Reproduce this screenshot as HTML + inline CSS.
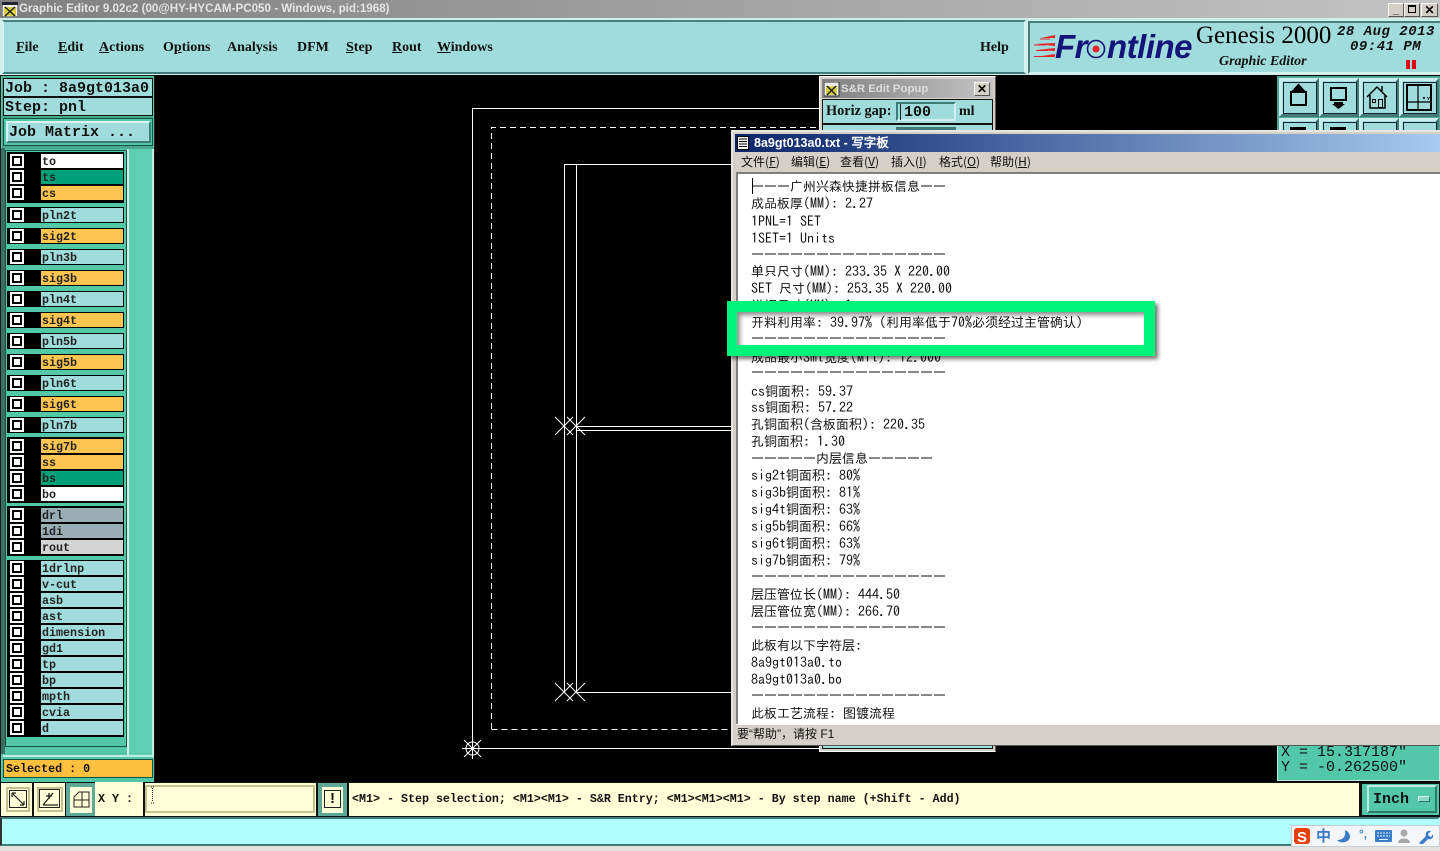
<!DOCTYPE html>
<html><head><meta charset="utf-8"><style>
html,body{margin:0;padding:0;width:1440px;height:851px;overflow:hidden;background:#d4d0c8}
div,span.a,svg.a{position:absolute;box-sizing:border-box}
.menu{font:bold 14px/16px "Liberation Serif",serif;top:40px;color:#111;white-space:nowrap}
.mono{font-family:"Liberation Mono",monospace;font-weight:bold;color:#111;white-space:pre}
.ck{left:10px;width:14px;height:14px;border:2px solid #fff;background:#000}
.ck:after{content:"";position:absolute;left:2px;top:2px;width:6px;height:6px;background:#fff}
.lb{left:41px;width:82px;height:14px;font:bold 11.7px/16px "Liberation Mono",monospace;color:#222;padding-left:1px;white-space:pre;background:#a0dcdc;overflow:hidden}
.grp{left:7px;width:117px;background:#000}
.wl{left:751px;font:14px/17px "IPAGothic","WenQuanYi Zen Hei","Noto Sans CJK SC",sans-serif;color:#111;white-space:pre;width:600px;height:17px}
.wl em{font-style:normal;font-size:13px}
.tool{width:40px;height:39px;top:78px;background:#a0dcdc;border:3px solid;border-color:#c9eeee #3f7c78 #3f7c78 #c9eeee}
.tool b{position:absolute;left:1px;top:1px;width:32px;height:30px;border:1px solid #123;display:block}
.wm{top:155px;font:12px/14px "WenQuanYi Zen Hei","Noto Sans CJK SC",sans-serif;color:#111;white-space:nowrap}
.by{background:#ffffd8}
</style></head><body>

<!-- title bar -->
<div style="left:0;top:0;width:1440px;height:18px;background:linear-gradient(90deg,#808080,#c4c4c4)"></div>
<svg class="a" style="left:2px;top:2px" width="16" height="15"><rect width="16" height="15" fill="#eee" stroke="#333"/><rect y="0" width="16" height="3" fill="#223"/><rect x="2" y="5" width="12" height="9" fill="#d8d040"/><path d="M3 5l10 9M13 5L3 14" stroke="#222" stroke-width="1.5"/></svg>
<div style="left:19px;top:1px;font:bold 11.620px/16px 'Liberation Sans',sans-serif;color:#e4e4e4;white-space:nowrap">Graphic Editor 9.02c2 (00@HY-HYCAM-PC050 - Windows, pid:1968)</div>
<div style="left:1388px;top:3px;width:16px;height:14px;background:#d4d0c8;border:1px solid;border-color:#fff #555 #555 #fff;font:bold 11px/12px 'Liberation Sans';text-align:center">_</div>
<div style="left:1404px;top:3px;width:16px;height:14px;background:#d4d0c8;border:1px solid;border-color:#fff #555 #555 #fff"></div>
<div style="left:1408px;top:5px;width:8px;height:8px;border:1px solid #000;border-top-width:2px"></div>
<div style="left:1421px;top:3px;width:17px;height:14px;background:#d4d0c8;border:1px solid;border-color:#fff #555 #555 #fff;font:bold 12px/12px 'Liberation Sans';text-align:center">✕</div>

<!-- menu bar -->
<div style="left:0;top:18px;width:1440px;height:57px;background:#cfeeee"></div>
<div style="left:2px;top:20px;width:1024px;height:54px;background:#a0dcdc;border:2px solid;border-color:#4c7f7c #d8f2f2 #3f7c78 #d8f2f2"></div>
<div class="menu" style="left:16px"><u>F</u>ile</div>
<div class="menu" style="left:58px"><u>E</u>dit</div>
<div class="menu" style="left:99px"><u>A</u>ctions</div>
<div class="menu" style="left:163px">O<u>p</u>tions</div>
<div class="menu" style="left:227px">Analysis</div>
<div class="menu" style="left:297px">DFM</div>
<div class="menu" style="left:346px"><u>S</u>tep</div>
<div class="menu" style="left:392px"><u>R</u>out</div>
<div class="menu" style="left:437px"><u>W</u>indows</div>
<div class="menu" style="left:980px">Help</div>

<div style="left:1028px;top:21px;width:412px;height:53px;background:#a0dcdc;border-top:2px solid #4c7f7c;border-left:2px solid #4c7f7c;border-bottom:2px solid #d8f2f2"></div>
<svg class="a" style="left:1033px;top:33px" width="24" height="26"><path d="M2 24l20-3v3zM4 17l18-2v3zM2 11l20-1v3zM8 5l14-3v3z" fill="#e8222a"/><path d="M1 23.500h12M3 17.500h12M1 12h12M7 6h10" stroke="#e8222a"/></svg>
<div style="left:1055px;top:28px;font:italic bold 33px/38px 'Liberation Sans',sans-serif;color:#14147a;white-space:nowrap;letter-spacing:-.5px">Fr<span style="display:inline-block;width:20px"></span>ntline</div>
<svg class="a" style="left:1086px;top:39px" width="20" height="20"><circle cx="10" cy="10" r="8.500" fill="none" stroke="#14147a" stroke-width="1.600"/><circle cx="10" cy="10" r="3.500" fill="#e8222a"/></svg>
<div style="left:1196px;top:21px;font:25px/30px 'Liberation Serif',serif;color:#000;white-space:nowrap">Genesis 2000</div>
<div style="left:1219px;top:54px;font:italic bold 14px/16px 'Liberation Serif',serif;color:#111;white-space:nowrap">Graphic Editor</div>
<div style="left:1337px;top:24px;font:italic bold 14px/16px 'Liberation Mono',monospace;color:#111;white-space:pre;letter-spacing:.5px">28 Aug 2013</div>
<div style="left:1350px;top:39px;font:italic bold 14px/16px 'Liberation Mono',monospace;color:#111;white-space:pre;letter-spacing:.5px">09:41 PM</div>
<div style="left:1406px;top:60px;width:4px;height:9px;background:#e00010"></div>
<div style="left:1412px;top:60px;width:4px;height:9px;background:#e00010"></div>

<!-- canvas -->
<div style="left:155px;top:75px;width:1285px;height:708px;background:#000"></div>
<svg class="a" style="left:155px;top:75px" width="700" height="708" fill="none" stroke="#fff" stroke-width="1" shape-rendering="crispEdges">
<path d="M317.500 673V33.500H680M317.500 673.500H700"/>
<path d="M336.500 654V52.500H680M336.500 654.500H700" stroke-dasharray="6 4"/>
<path d="M409.500 89V618M421.500 89V618M409.500 89.500H700M421.500 351.500H700M421.500 355.500H700M421.500 617.500H700"/>
<path d="M400 342l18 18M418 342l-18 18M412 342l18 18M430 342l-18 18M400 608l18 18M418 608l-18 18M412 608l18 18M430 608l-18 18" shape-rendering="auto"/>
<g shape-rendering="auto"><circle cx="317.500" cy="673.500" r="6.500"/><path d="M309 665l17 17M326 665l-17 17M317.500 663v21M307 673.500h21"/></g>
</svg>

<!-- left panel -->
<div style="left:0;top:75px;width:155px;height:708px;background:#52c8a8;border:1px solid #1a1a1a"></div>
<div style="left:2px;top:77px;width:151px;height:72px;background:#4aa88f"></div>
<div style="left:3px;top:78px;width:150px;height:19px;background:#a0dcdc;border:1px solid #111"></div>
<div class="mono" style="left:5px;top:80px;font-size:15px;line-height:17px">Job : 8a9gt013a0</div>
<div style="left:3px;top:97px;width:150px;height:19px;background:#a0dcdc;border:1px solid #111"></div>
<div class="mono" style="left:5px;top:99px;font-size:15px;line-height:17px">Step: pnl</div>
<div style="left:3px;top:118px;width:150px;height:28px;background:#52c8a8;border:1px solid #14513f"></div>
<div style="left:6px;top:121px;width:145px;height:22px;background:#a0dcdc;border:2px solid;border-color:#d8f2f2 #3f7c78 #3f7c78 #d8f2f2"></div>
<div class="mono" style="left:9px;top:124px;font-size:15px;line-height:17px">Job Matrix ...</div>
<div style="left:1px;top:148px;width:4px;height:606px;background:#3a6f62"></div>
<div style="left:127px;top:149px;width:27px;height:606px;background:#5ecfb0;border-left:2px solid #cfeee5;border-right:2px solid #c0ece0"></div>
<div style="left:5px;top:150px;width:122px;height:597px;background:#52c8a8;border:1px solid #14513f"></div>

<div class="grp" style="top:152px;height:51px"></div>
<div class="grp" style="top:207px;height:16px"></div><div class="grp" style="top:228px;height:16px"></div><div class="grp" style="top:249px;height:16px"></div><div class="grp" style="top:270px;height:16px"></div><div class="grp" style="top:291px;height:16px"></div><div class="grp" style="top:312px;height:16px"></div><div class="grp" style="top:333px;height:16px"></div><div class="grp" style="top:354px;height:16px"></div><div class="grp" style="top:375px;height:16px"></div><div class="grp" style="top:396px;height:16px"></div><div class="grp" style="top:417px;height:16px"></div>
<div class="grp" style="top:437px;height:66px"></div>
<div class="grp" style="top:506px;height:50px"></div>
<div class="grp" style="top:560px;height:177px"></div>

<div class="ck" style="top:154px"></div><div class="lb" style="top:154px;background:#fff">to</div>
<div class="ck" style="top:170px"></div><div class="lb" style="top:170px;background:#00a078">ts</div>
<div class="ck" style="top:186px"></div><div class="lb" style="top:186px;background:#ffc550">cs</div>
<div class="ck" style="top:208px"></div><div class="lb" style="top:208px">pln2t</div>
<div class="ck" style="top:229px"></div><div class="lb" style="top:229px;background:#ffc550">sig2t</div>
<div class="ck" style="top:250px"></div><div class="lb" style="top:250px">pln3b</div>
<div class="ck" style="top:271px"></div><div class="lb" style="top:271px;background:#ffc550">sig3b</div>
<div class="ck" style="top:292px"></div><div class="lb" style="top:292px">pln4t</div>
<div class="ck" style="top:313px"></div><div class="lb" style="top:313px;background:#ffc550">sig4t</div>
<div class="ck" style="top:334px"></div><div class="lb" style="top:334px">pln5b</div>
<div class="ck" style="top:355px"></div><div class="lb" style="top:355px;background:#ffc550">sig5b</div>
<div class="ck" style="top:376px"></div><div class="lb" style="top:376px">pln6t</div>
<div class="ck" style="top:397px"></div><div class="lb" style="top:397px;background:#ffc550">sig6t</div>
<div class="ck" style="top:418px"></div><div class="lb" style="top:418px">pln7b</div>
<div class="ck" style="top:439px"></div><div class="lb" style="top:439px;background:#ffc550">sig7b</div>
<div class="ck" style="top:455px"></div><div class="lb" style="top:455px;background:#ffc550">ss</div>
<div class="ck" style="top:471px"></div><div class="lb" style="top:471px;background:#00a078">bs</div>
<div class="ck" style="top:487px"></div><div class="lb" style="top:487px;background:#fff">bo</div>
<div class="ck" style="top:508px"></div><div class="lb" style="top:508px;background:#98aeb4">drl</div>
<div class="ck" style="top:524px"></div><div class="lb" style="top:524px;background:#98aeb4">1di</div>
<div class="ck" style="top:540px"></div><div class="lb" style="top:540px;background:#d4d4d4">rout</div>
<div class="ck" style="top:561px"></div><div class="lb" style="top:561px">1drlnp</div>
<div class="ck" style="top:577px"></div><div class="lb" style="top:577px">v-cut</div>
<div class="ck" style="top:593px"></div><div class="lb" style="top:593px">asb</div>
<div class="ck" style="top:609px"></div><div class="lb" style="top:609px">ast</div>
<div class="ck" style="top:625px"></div><div class="lb" style="top:625px">dimension</div>
<div class="ck" style="top:641px"></div><div class="lb" style="top:641px">gd1</div>
<div class="ck" style="top:657px"></div><div class="lb" style="top:657px">tp</div>
<div class="ck" style="top:673px"></div><div class="lb" style="top:673px">bp</div>
<div class="ck" style="top:689px"></div><div class="lb" style="top:689px">mpth</div>
<div class="ck" style="top:705px"></div><div class="lb" style="top:705px">cvia</div>
<div class="ck" style="top:721px"></div><div class="lb" style="top:721px">d</div>

<div style="left:3px;top:755px;width:151px;height:2px;background:#c0ece0"></div>
<div style="left:3px;top:759px;width:150px;height:19px;background:#ffc040;border:1px solid #14513f"></div>
<div class="mono" style="left:6px;top:761px;font-size:11.700px;line-height:16px">Selected : 0</div>

<!-- right toolbox -->
<div style="left:1277px;top:76px;width:163px;height:60px;background:#52a898"></div>
<div class="tool" style="left:1279px"><b></b><svg class="a" style="left:0;top:0" width="34" height="33" fill="none" stroke="#000" stroke-width="2"><path d="M9 11h15v13H9z"/><path d="M11 10l5.500-6 5.500 6z" fill="#000"/></svg></div>
<div class="tool" style="left:1319px"><b></b><svg class="a" style="left:0;top:0" width="34" height="33" fill="none" stroke="#000" stroke-width="2"><path d="M9 7h15v12H9z"/><path d="M12 21h9v2h2l-6.500 5-6.500-5h2z" fill="#000" stroke="none"/></svg></div>
<div class="tool" style="left:1359px"><b></b><svg class="a" style="left:0;top:0" width="34" height="33" fill="none" stroke="#000"><path d="M5 16L15 6l10 10M8 14v13h15V14M20 10V5" stroke-width="1.500"/><path d="M10.500 18.500h3v3h-3zM16.500 18.500h4v8h-4z"/></svg></div>
<div class="tool" style="left:1399px"><b></b><svg class="a" style="left:0;top:0" width="34" height="33" fill="none" stroke="#000"><path d="M5 4h24v25H5z" stroke-width="2"/><path d="M16 4v25M5 21h24" stroke-width="1.200"/><path d="M21 16l2 2m0-2l-2 2M25 16l1.500 1.500 1.500-1.500M26.500 17.500v1.500" stroke-width=".7"/></svg></div>
<div class="tool" style="left:1279px;top:118px"><b></b><span class="a" style="left:8px;top:6px;width:16px;height:4px;background:#000"></span></div>
<div class="tool" style="left:1319px;top:118px"><b></b><span class="a" style="left:8px;top:6px;width:16px;height:4px;background:#000"></span></div>
<div class="tool" style="left:1359px;top:118px"><b></b></div>
<div class="tool" style="left:1399px;top:118px"><b></b></div>

<!-- S&R popup -->
<div style="left:819px;top:76px;width:177px;height:676px;background:#d4d0c8;border:1px solid #fff;border-right-color:#555"></div>
<div style="left:822px;top:79px;width:171px;height:19px;background:linear-gradient(90deg,#808080,#c4c4c4)"></div>
<svg class="a" style="left:824px;top:82px" width="16" height="15"><rect width="15" height="14" fill="#eee" stroke="#333"/><rect x="2" y="4" width="11" height="9" fill="#d8d040"/><path d="M3 4l9 9M12 4l-9 9" stroke="#222" stroke-width="1.500"/></svg>
<div style="left:841px;top:81px;font:bold 11.400px/16px 'Liberation Sans',sans-serif;color:#ddd;white-space:nowrap">S&amp;R Edit Popup</div>
<div style="left:974px;top:82px;width:16px;height:14px;background:#d4d0c8;border:1px solid;border-color:#fff #555 #555 #fff;font:bold 12px/12px 'Liberation Sans';text-align:center">✕</div>
<div style="left:822px;top:99px;width:171px;height:650px;background:#a0dcdc;border:1px solid #111"></div>
<div style="left:823px;top:123px;width:169px;height:2px;background:#111"></div>
<div style="left:826px;top:103px;font:bold 14.300px/17px 'Liberation Serif',serif;color:#111;white-space:nowrap">Horiz gap:</div>
<div style="left:896px;top:102px;width:60px;height:19px;background:#a0dcdc;border:2px solid;border-color:#3f7c78 #d0f0f0 #d0f0f0 #3f7c78"></div>
<div style="left:904px;top:104px;font:bold 15px/17px 'Liberation Mono',monospace;color:#111;white-space:nowrap">100</div>
<div style="left:900px;top:104px;width:1px;height:16px;background:#222"></div>
<div style="left:959px;top:103px;font:bold 14px/17px 'Liberation Serif',serif;color:#111;white-space:nowrap">ml</div>
<div style="left:896px;top:127px;width:60px;height:6px;background:#3f7c78"></div>

<!-- XY readout -->
<div style="left:1277px;top:745px;width:163px;height:36px;background:#52c8a8;border:1px solid #c0ece0"></div>
<div style="left:1281px;top:745px;font:15px/15px 'Liberation Mono',monospace;color:#111;white-space:pre;height:15px">X = 15.317187"</div>
<div style="left:1281px;top:760px;font:15px/15px 'Liberation Mono',monospace;color:#111;white-space:pre">Y = -0.262500"</div>

<!-- bottom row -->
<div style="left:0;top:782px;width:1440px;height:36px;background:#111"></div>
<div class="by" style="left:1px;top:783px;width:31px;height:33px"></div>
<div class="by" style="left:34px;top:783px;width:31px;height:33px"></div>
<div style="left:66px;top:783px;width:29px;height:33px;background:#5ea898"></div>
<div class="by" style="left:95px;top:782px;width:48px;height:34px"></div>
<div class="by" style="left:145px;top:783px;width:171px;height:33px"></div>
<div style="left:318px;top:783px;width:29px;height:33px;background:#5ea898"></div>
<div class="by" style="left:349px;top:783px;width:1010px;height:33px"></div>
<div style="left:1361px;top:783px;width:79px;height:33px;background:#52c8a8;border:1px solid #111"></div>

<div style="left:6px;top:787px;width:24px;height:25px;border:2px solid #c4c090"></div>
<svg class="a" style="left:9px;top:790px" width="19" height="19" fill="none" stroke="#222"><path d="M.5.500h17v17H.5z"/><path d="M3 3l12 12M3 3h4M3 3v4M15 15h-4M15 15v-4" stroke-width="1.200"/></svg>
<div style="left:37px;top:787px;width:26px;height:25px;border:2px solid #c4c090"></div>
<svg class="a" style="left:39px;top:789px" width="22" height="20" fill="none" stroke="#222"><path d="M.5.500h20v18H.5z"/><path d="M4 16L14 4M4 16h15M10 4v6M7 7h6" stroke-width="1.300"/></svg>
<div style="left:70px;top:787px;width:22px;height:26px;background:#ffffd8"></div>
<svg class="a" style="left:73px;top:791px" width="17" height="17" fill="none" stroke="#222"><path d="M1 16V6l5-5h10v15zM9 1v15M1 9h15"/></svg>
<div class="mono" style="left:98px;top:791px;font-size:11.700px;line-height:16px">X Y :</div>
<div style="left:145px;top:785px;width:170px;height:28px;border:2px solid;border-color:#c4c090;background:#ffffd8"></div>
<svg class="a" style="left:150px;top:786px" width="5" height="20" stroke="#222" stroke-dasharray="1 1"><path d="M2.500 2v14M1 1h3M1 17h3"/></svg>
<div style="left:322px;top:787px;width:21px;height:26px;background:#ffffd8"></div>
<div style="left:324px;top:790px;width:17px;height:18px;border:1px solid #222;font:bold 15px/16px 'Liberation Sans';text-align:center;color:#111">!</div>
<div class="mono" style="left:352px;top:791px;font-size:11.670px;line-height:16px">&lt;M1&gt; - Step selection; &lt;M1&gt;&lt;M1&gt; - S&amp;R Entry; &lt;M1&gt;&lt;M1&gt;&lt;M1&gt; - By step name (+Shift - Add)</div>
<div style="left:1367px;top:785px;width:70px;height:28px;background:#52c8a8;border:2px solid;border-color:#c0ece0 #2c7a68 #2c7a68 #c0ece0"></div>
<div class="mono" style="left:1373px;top:791px;font-size:15px;line-height:17px">Inch</div>
<div style="left:1418px;top:796px;width:12px;height:6px;background:#8ed8c4;border:1px solid;border-color:#d8f2f2 #2c7a68 #2c7a68 #d8f2f2"></div>

<!-- command line -->
<div style="left:0;top:817px;width:1440px;height:29px;background:#b0ffff;border:2px solid;border-color:#3f7c78 #b0ffff #3f7c78 #333"></div>
<div style="left:0;top:846px;width:1440px;height:5px;background:#e4e2de"></div>
<div style="left:1291px;top:825px;width:149px;height:22px;background:#f4f6f8;border:1px solid #c8ccd0"></div>
<svg class="a" style="left:1293px;top:827px" width="18" height="18"><rect x="1" y="1" width="16" height="16" rx="3" fill="#e8400c"/><text x="9" y="15" font-family="Liberation Sans" font-weight="bold" font-size="15" fill="#fff" text-anchor="middle">S</text></svg>
<div style="left:1316px;top:827px;font:bold 15px/18px 'Noto Sans CJK SC',sans-serif;color:#3a7cc8">中</div>
<svg class="a" style="left:1336px;top:829px" width="16" height="15"><path d="M9 1c1 7-2 10-8 10 3 4 12 3 13-3 0-3-2-6-5-7z" fill="#3a7cc8"/></svg>
<div style="left:1359px;top:826px;font:bold 12px/16px 'Liberation Sans';color:#3a7cc8">°,</div>
<svg class="a" style="left:1375px;top:830px" width="18" height="13"><rect width="17" height="12" rx="1" fill="#3a7cc8"/><path d="M2 3h13M2 6h13" stroke="#e4f0fa" stroke-dasharray="2 1"/><path d="M4 9.500h9" stroke="#e4f0fa"/></svg>
<svg class="a" style="left:1397px;top:829px" width="14" height="15"><circle cx="7" cy="4" r="3.500" fill="#a8a8a8"/><path d="M1 14c0-6 12-6 12 0z" fill="#a8a8a8"/></svg>
<svg class="a" style="left:1417px;top:829px" width="16" height="15"><path d="M2 14l7-7c-1-3 1-6 5-5l-3 3 1 2 2 1 2-3c1 4-2 6-5 5l-6 6z" fill="#3a7cc8"/></svg>

<!-- wordpad -->
<div style="left:731px;top:130px;width:709px;height:616px;background:#d4d0c8;border-top:2px solid #e8e6e0;border-left:2px solid #e8e6e0;border-bottom:1px solid #555"></div>
<div style="left:735px;top:134px;width:705px;height:18px;background:linear-gradient(90deg,#0a246a,#a6caf0)"></div>
<svg class="a" style="left:737px;top:136px" width="12" height="14"><rect x=".5" y=".5" width="11" height="13" fill="#fff" stroke="#000"/><path d="M2 3h8M2 5.500h8M2 8h8M2 10.500h8" stroke="#000"/></svg>
<div style="left:754px;top:135px;font:bold 12.500px/16px 'Liberation Sans','WenQuanYi Zen Hei',sans-serif;color:#fff;white-space:nowrap">8a9gt013a0.txt - 写字板</div>
<div class="wm" style="left:741px">文件(<u>F</u>)</div>
<div class="wm" style="left:791px">编辑(<u>E</u>)</div>
<div class="wm" style="left:840px">查看(<u>V</u>)</div>
<div class="wm" style="left:891px">插入(<u>I</u>)</div>
<div class="wm" style="left:939px">格式(<u>O</u>)</div>
<div class="wm" style="left:990px">帮助(<u>H</u>)</div>
<div style="left:736px;top:172px;width:704px;height:552px;background:#fff;border-top:2px solid #808080;border-left:2px solid #808080"></div>
<div style="left:752px;top:178px;width:1px;height:16px;background:#000"></div>

<div class="wl" style="top:178px"><em>———广州兴森快捷拼板信息——</em></div>
<div class="wl" style="top:195px"><em>成品板厚</em>(MM): 2.27</div>
<div class="wl" style="top:213px">1PNL=1 SET</div>
<div class="wl" style="top:230px">1SET=1 Units</div>
<div class="wl" style="top:246px"><em>———————————————</em></div>
<div class="wl" style="top:263px"><em>单只尺寸</em>(MM): 233.35 X 220.00</div>
<div class="wl" style="top:280px">SET <em>尺寸</em>(MM): 253.35 X 220.00</div>
<div class="wl" style="top:297px"><em>拼板尺寸</em>(MM): 1</div>
<div class="wl" style="top:349px"><em>成品最小</em>Smt<em>宽度</em>(Mil): 12.000</div>
<div class="wl" style="top:364px"><em>———————————————</em></div>
<div class="wl" style="top:383px">cs<em>铜面积</em>: 59.37</div>
<div class="wl" style="top:399px">ss<em>铜面积</em>: 57.22</div>
<div class="wl" style="top:416px"><em>孔铜面积</em>(<em>含板面积</em>): 220.35</div>
<div class="wl" style="top:433px"><em>孔铜面积</em>: 1.30</div>
<div class="wl" style="top:450px"><em>—————内层信息—————</em></div>
<div class="wl" style="top:467px">sig2t<em>铜面积</em>: 80%</div>
<div class="wl" style="top:484px">sig3b<em>铜面积</em>: 81%</div>
<div class="wl" style="top:501px">sig4t<em>铜面积</em>: 63%</div>
<div class="wl" style="top:518px">sig5b<em>铜面积</em>: 66%</div>
<div class="wl" style="top:535px">sig6t<em>铜面积</em>: 63%</div>
<div class="wl" style="top:552px">sig7b<em>铜面积</em>: 79%</div>
<div class="wl" style="top:568px"><em>———————————————</em></div>
<div class="wl" style="top:586px"><em>层压管位长</em>(MM): 444.50</div>
<div class="wl" style="top:603px"><em>层压管位宽</em>(MM): 266.70</div>
<div class="wl" style="top:619px"><em>———————————————</em></div>
<div class="wl" style="top:637px"><em>此板有以下字符层</em>:</div>
<div class="wl" style="top:654px">8a9gt013a0.to</div>
<div class="wl" style="top:671px">8a9gt013a0.bo</div>
<div class="wl" style="top:687px"><em>———————————————</em></div>
<div class="wl" style="top:705px"><em>此板工艺流程</em>: <em>图镀流程</em></div>

<div style="left:736px;top:724px;width:704px;height:1px;background:#fff"></div>
<div style="left:737px;top:727px;font:12px/15px 'Liberation Sans','WenQuanYi Zen Hei','Noto Sans CJK SC',sans-serif;color:#111;white-space:nowrap">要“帮助”，请按 F1</div>

<!-- green highlight -->
<div style="left:727px;top:301px;width:428px;height:55px;border:solid #00f57a;border-width:11px 11px 11px 10px;background:#fff;box-shadow:3px 3px 4px rgba(0,0,0,.55),inset 3px 3px 5px rgba(0,0,0,.45)"></div>
<div class="wl" style="top:314px"><em>开料利用率</em>: 39.97% (<em>利用率低于</em>70%<em>必须经过主管确认</em>)</div>
<div class="wl" style="top:330px"><em>———————————————</em></div>
</body></html>
